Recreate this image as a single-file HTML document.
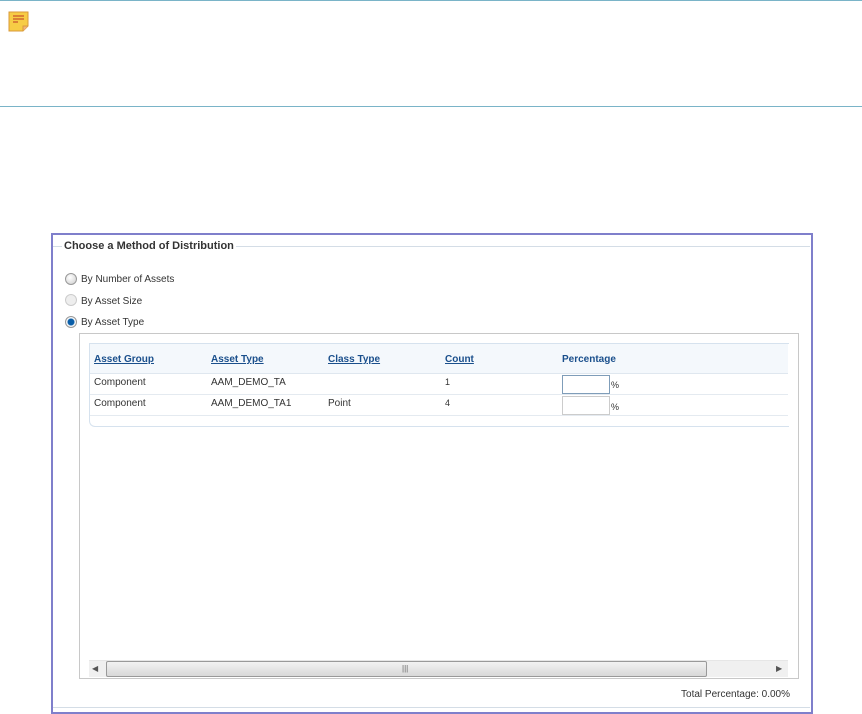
<!DOCTYPE html>
<html><head><style>
body{margin:0;width:862px;height:714px;background:#fff;font-family:"Liberation Sans",Arial,sans-serif;font-size:10px;color:#333;position:relative;overflow:hidden}
.a{position:absolute}
a{color:#1a4f8c;text-decoration:underline;font-weight:bold}
.radio{position:absolute;width:10px;height:10px;border-radius:50%;border:1px solid #999;background:radial-gradient(circle at 40% 35%,#fff,#ccc)}
</style></head><body>
<div class="a" style="left:0;top:0;width:862px;height:1px;background:#7ab4c8"></div>
<div class="a" style="left:0;top:106px;width:862px;height:1px;background:#7ab4c8"></div>
<svg class="a" style="left:8px;top:11px" width="21" height="21" viewBox="0 0 21 21">
<path d="M1 1h19v14l-5 5H1z" fill="#f7cc45" stroke="#d99a3a"/>
<path d="M15 20v-5h5" fill="#f3b37a" stroke="#d99a3a"/>
<path d="M5 5h11M5 8h11M5 11h5" stroke="#c9542c" stroke-width="1.3"/>
</svg>
<div class="a" style="left:51px;top:233px;width:758px;height:477px;border:2px solid #7f7fcb"></div>
<div class="a" style="left:53px;top:246px;width:757px;height:1px;background:#d4dde6"></div>
<div class="a" style="left:53px;top:707px;width:757px;height:1px;background:#d4dde6"></div>
<div class="a" style="left:62px;top:240px;background:#fff;padding:0 2px;font-weight:bold;font-size:11px;color:#333">Choose a Method of Distribution</div>
<div class="radio" style="left:65px;top:273px"></div><div class="a" style="left:81px;top:274px">By Number of Assets</div>
<div class="radio" style="left:65px;top:294px;border-color:#ccc;background:#eee"></div><div class="a" style="left:81px;top:296px">By Asset Size</div>
<div class="radio" style="left:65px;top:316px;background:radial-gradient(circle,#0a5ea8 0 3px,#fff 4px,#ccc)"></div><div class="a" style="left:81px;top:317px">By Asset Type</div>
<div class="a" style="left:79px;top:333px;width:718px;height:344px;border:1px solid #c8c8c8"></div>
<div class="a" style="left:89px;top:343px;width:699px;height:82px;border:1px solid #d6e2ee;border-right:none;border-radius:0 0 0 6px"></div>
<div class="a" style="left:90px;top:344px;width:698px;height:29px;background:#f4f8fc;border-bottom:1px solid #dfe7ef"></div>
<div class="a" style="left:90px;top:394px;width:698px;height:1px;background:#e4eaf0"></div>
<div class="a" style="left:90px;top:415px;width:698px;height:1px;background:#e4eaf0"></div>
<div class="a" style="left:94px;top:354px"><a>Asset Group</a></div>
<div class="a" style="left:211px;top:354px"><a>Asset Type</a></div>
<div class="a" style="left:328px;top:354px"><a>Class Type</a></div>
<div class="a" style="left:445px;top:354px"><a>Count</a></div>
<div class="a" style="left:562px;top:354px;font-weight:bold;color:#1a4f8c">Percentage</div>
<div class="a" style="left:94px;top:377px">Component</div>
<div class="a" style="left:211px;top:377px">AAM_DEMO_TA</div>
<div class="a" style="left:445px;top:377px;font-size:9px">1</div>
<div class="a" style="left:562px;top:375px;width:46px;height:17px;border:1px solid #7f9db9"></div>
<div class="a" style="left:611px;top:380px;font-size:9px">%</div>
<div class="a" style="left:94px;top:398px">Component</div>
<div class="a" style="left:211px;top:398px">AAM_DEMO_TA1</div>
<div class="a" style="left:328px;top:398px">Point</div>
<div class="a" style="left:445px;top:398px;font-size:9px">4</div>
<div class="a" style="left:562px;top:396px;width:46px;height:17px;border:1px solid #ccc"></div>
<div class="a" style="left:611px;top:402px;font-size:9px">%</div>
<div class="a" style="left:89px;top:660px;width:699px;height:16px;background:#f0f0f0;border-top:1px solid #e6e6e6"></div>
<div class="a" style="left:106px;top:661px;width:599px;height:14px;border:1px solid #999;border-radius:2px;background:linear-gradient(#f2f2f2,#d8d8d8)"></div>
<div class="a" style="left:402px;top:664px;font-size:8px;color:#666">|||</div>
<div class="a" style="left:92px;top:664px;font-size:8px;color:#555">◀</div>
<div class="a" style="left:776px;top:664px;font-size:8px;color:#555">▶</div>
<div class="a" style="right:72px;top:689px;font-size:10px">Total Percentage: 0.00%</div>
</body></html>
